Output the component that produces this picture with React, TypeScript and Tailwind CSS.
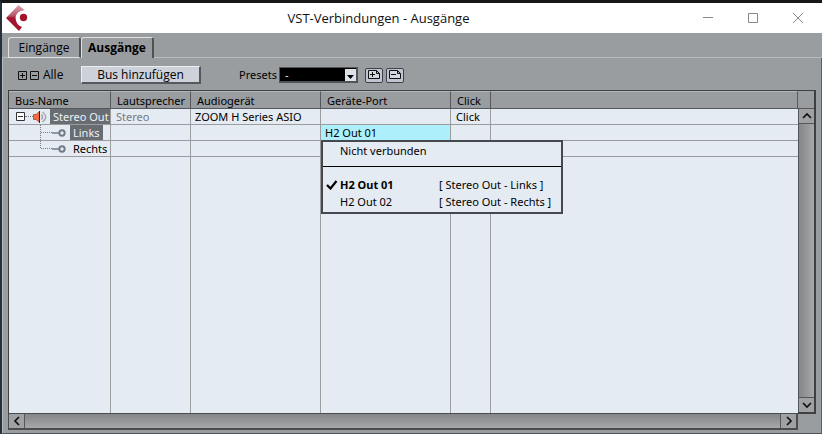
import type { ReactNode } from 'react';

const columns = ['Bus-Name', 'Lautsprecher', 'Audiogerät', 'Geräte-Port', 'Click', ''];

function Logo() {
  return (
    <svg width="23" height="26" viewBox="0 0 23 26" aria-hidden="true">
      <defs>
        <linearGradient id="logo" x1="0" y1="0" x2="0" y2="1">
          <stop offset="0" stopColor="#dba6b2" />
          <stop offset="0.42" stopColor="#b85468" />
          <stop offset="0.5" stopColor="#a3142f" />
          <stop offset="1" stopColor="#a3142f" />
        </linearGradient>
      </defs>
      <path d="M12.5 0 L18.5 5 Q10 6 9.5 13 Q10 20 16 22 L13 26 L0 13 Z" fill="url(#logo)" />
      <circle cx="17.5" cy="12.5" r="3.7" fill="#a3142f" />
    </svg>
  );
}

function Speaker() {
  return (
    <svg width="15" height="14" viewBox="0 0 15 14" aria-hidden="true">
      <path d="M.5 4.5H3L6.5 1.5V12.5L3 9.5H.5Z" fill="#f96a3c" stroke="#8a4030" strokeWidth=".7" />
      <path d="M6.5 1V13" stroke="#222" />
      <path d="M8.5 4.5Q10.5 7 8.5 9.5M9.5 2Q16 7 9.5 12" fill="none" stroke="#a4a8ac" strokeWidth="1.5" />
    </svg>
  );
}

function Branch({ last = false }: { last?: boolean }) {
  return (
    <svg className="ml-[31px] shrink-0" width="28" height="16" viewBox="0 0 28 16" aria-hidden="true">
      <path d={last ? 'M.5 0V8' : 'M.5 0V16'} stroke="#777b80" strokeDasharray="1 1" />
      <path d="M1 7.5H12" stroke="#777b80" strokeDasharray="1 1" />
      <path d="M12 8H20" stroke="#747a82" strokeWidth="1.5" />
      <circle cx="22" cy="8" r="2.7" fill="#e4ebf3" stroke="#747a82" strokeWidth="1.9" />
    </svg>
  );
}

function Arrow({ d, label, className }: { d: string; label: string; className: string }) {
  return (
    <button aria-label={label} className={`flex shrink-0 items-center justify-center border-[#55585b] bg-[#a0a1a3] ${className}`}>
      <svg width="10" height="10" viewBox="0 0 10 10" fill="none" stroke="#111" strokeWidth="1.7">
        <path d={d} />
      </svg>
    </button>
  );
}

function ExpandBox({ label, plus = false }: { label: string; plus?: boolean }) {
  return (
    <button aria-label={label} className="h-[9px] w-[9px]">
      <svg width="9" height="9" viewBox="0 0 9 9" fill="none" stroke="#111">
        <path d={plus ? 'M.5.5H8.5V8.5H.5ZM2 4.5H7M4.5 2V7' : 'M.5.5H8.5V8.5H.5ZM2 4.5H7'} />
      </svg>
    </button>
  );
}

function PresetButton({ label, plus = false }: { label: string; plus?: boolean }) {
  return (
    <button aria-label={label} className="h-[15px] w-[18px] rounded-[2px] border border-[#3d4046] bg-[#bfc5d1]">
      <svg width="16" height="13" viewBox="0 0 16 13" fill="none" stroke="#111">
        <path d="M2.5 1.5H10.5L13.5 4.5V9.5H2.5ZM10.5 1.5V4.5H13.5" fill="#d2d7e0" />
        <path d={plus ? 'M4 5.5H9M6.5 3V8' : 'M4 5.5H9'} />
      </svg>
    </button>
  );
}

function Cell({ children, className = '' }: { children?: ReactNode; className?: string }) {
  return <td className={`h-4 border-r border-b border-[#9b9c9e] p-0 whitespace-nowrap ${className}`}>{children}</td>;
}

function PortMenu() {
  return (
    <div
      role="menu"
      className="absolute top-[15px] left-0 z-10 flex w-[242px] flex-col border-2 border-[#45494e] bg-[#e4ebf3] pb-[2px] text-black"
    >
      <button role="menuitem" className="h-4 pl-[17px] text-left">
        Nicht verbunden
      </button>
      <hr className="mt-[8px] mb-[9px] border-black" />
      <button role="menuitemradio" aria-checked="true" className="flex h-[17px] items-center text-left">
        <svg className="ml-[3px] w-[14px] shrink-0" height="10" viewBox="0 0 14 10" fill="none" stroke="#000" strokeWidth="2.2">
          <path d="M1 5L4.5 8.5L10.5 1" />
        </svg>
        <span className="w-[99px] font-bold">H2 Out 01</span>
        <span>[ Stereo Out - Links ]</span>
      </button>
      <button role="menuitemradio" aria-checked="false" className="flex h-[17px] items-center pl-[17px] text-left">
        <span className="w-[99px]">H2 Out 02</span>
        <span>[ Stereo Out - Rechts ]</span>
      </button>
    </div>
  );
}

function BusTable() {
  return (
    <table className="h-full w-full table-fixed border-separate border-spacing-0 bg-[#e4ebf3] text-[11px] leading-[15px]">
      <colgroup>
        <col className="w-[102px]" />
        <col className="w-[80px]" />
        <col className="w-[130px]" />
        <col className="w-[130px]" />
        <col className="w-[40px]" />
        <col />
      </colgroup>
      <thead>
        <tr>
          {columns.map((name, i) => (
            <th
              key={i}
              className="h-[18px] border-t border-r border-b border-t-[#b5b8ba] border-r-[#55585c] border-b-[#55585c] bg-[#999da0] p-0 pl-[6px] text-left font-normal whitespace-nowrap"
            >
              {name}
            </th>
          ))}
        </tr>
      </thead>
      <tbody>
        <tr>
          <Cell>
            <div className="flex h-[15px] items-center">
              <button aria-label="Stereo Out einklappen" className="ml-[7px] h-[9px] w-[9px] shrink-0">
                <svg width="9" height="9" viewBox="0 0 9 9" fill="#fff" stroke="#333">
                  <path d="M.5.5H8.5V8.5H.5ZM2 4.5H7" />
                </svg>
              </button>
              <span className="w-[8px] shrink-0 border-t border-dotted border-[#777b80]" />
              <Speaker />
              <span className="ml-[2px] h-[15px] grow bg-[#686d74] pl-[3px] text-[#eef1f5]">Stereo Out</span>
            </div>
          </Cell>
          <Cell className="pl-[5px] text-[#777a7e]">Stereo</Cell>
          <Cell className="pl-[4px]">ZOOM H Series ASIO</Cell>
          <Cell />
          <Cell className="pl-[5px]">Click</Cell>
          <Cell className="border-r-0" />
        </tr>
        <tr>
          <Cell>
            <div className="flex h-[15px] items-center">
              <Branch />
              <span className="ml-[2px] h-[15px] bg-[#686d74] px-[3px] text-[#eef1f5]">Links</span>
            </div>
          </Cell>
          <Cell />
          <Cell />
          <Cell className="relative bg-[#aeeffc]">
            <button aria-haspopup="menu" className="block h-[15px] w-full pl-[4px] text-left">
              H2 Out 01
            </button>
            <PortMenu />
          </Cell>
          <Cell />
          <Cell className="border-r-0" />
        </tr>
        <tr>
          <Cell>
            <div className="flex h-[15px] items-center">
              <Branch last />
              <span className="ml-[2px] px-[3px]">Rechts</span>
            </div>
          </Cell>
          <Cell />
          <Cell />
          <Cell />
          <Cell />
          <Cell className="border-r-0" />
        </tr>
        <tr className="h-full">
          {columns.map((_, i) => (
            <td key={i} className="border-r border-[#9b9c9e] p-0 last:border-r-0" />
          ))}
        </tr>
      </tbody>
    </table>
  );
}

export default function App() {
  return (
    <div className="flex h-screen flex-col border-t-3 border-b border-l-2 border-t-[#17181a] border-b-[#505458] border-l-[#25303b] bg-[#999da0] font-['Noto_Sans',sans-serif] text-black">
      <header className="flex h-[30px] shrink-0 items-center bg-white pl-[4px]">
        <Logo />
        <h1 className="grow pl-[43px] text-center font-['Open_Sans',sans-serif] text-[13px] leading-5 text-[#111]">
          VST-Verbindungen - Ausgänge
        </h1>
        <div className="flex text-[#888]">
          <button aria-label="Minimieren" className="flex w-[45px] justify-center">
            <svg width="10" height="10" viewBox="0 0 10 10" stroke="currentColor"><path d="M0 4.5H10" /></svg>
          </button>
          <button aria-label="Maximieren" className="flex w-[45px] justify-center">
            <svg width="10" height="10" viewBox="0 0 10 10" fill="none" stroke="currentColor"><path d="M.5.5H9.5V9.5H.5Z" /></svg>
          </button>
          <button aria-label="Schließen" className="mr-px flex w-[46px] justify-center">
            <svg width="10" height="10" viewBox="0 0 10 10" stroke="currentColor"><path d="M0 0L10 10M10 0L0 10" /></svg>
          </button>
        </div>
      </header>

      <div role="tablist" className="flex h-[25px] shrink-0 items-end font-['Open_Sans',sans-serif] text-xs">
        <div className="h-px w-[6px] bg-[#b9bcbe]" />
        <button role="tab" aria-selected="false" className="h-[21px] w-[73px] rounded-t-[3px] border-t border-r-2 border-b border-l border-t-[#dfe1e3] border-r-[#4e5255] border-b-[#dfe1e3] border-l-[#dfe1e3]">
          Eingänge
        </button>
        <button role="tab" aria-selected="true" className="h-[21px] w-[73px] rounded-t-[3px] border-t border-r-2 border-l border-t-[#dfe1e3] border-r-[#4e5255] border-l-[#dfe1e3] font-bold">
          Ausgänge
        </button>
        <div className="h-px grow bg-[#b9bcbe]" />
      </div>

      <main className="flex min-h-0 grow flex-col border-r border-l border-r-[#5b5f62] border-l-[#b9bcbe] pr-[5px] pb-[3px] pl-[5px]">
        <div className="flex h-[32px] shrink-0 items-center pt-[2px] pl-[10px] font-['Open_Sans',sans-serif] text-xs">
          <ExpandBox label="Alle ausklappen" plus />
          <span className="w-[3px]" />
          <ExpandBox label="Alle einklappen" />
          <span className="w-[39px] pl-[4px]">Alle</span>
          <span className="w-[3px]" />
          <button className="h-[18px] w-[120px] border-t border-r-2 border-b-2 border-l border-t-[#eceef2] border-r-[#55595d] border-b-[#55595d] border-l-[#eceef2] bg-[#cdd1da] leading-[15px]">
            Bus hinzufügen
          </button>
          <label htmlFor="presets" className="ml-[38px] w-[40px] font-['Noto_Sans',sans-serif] text-[11px]">
            Presets
          </label>
          <div className="relative h-[16px] w-[79px]">
            <select id="presets" className="block h-full w-full appearance-none border-t border-r-2 border-b-2 border-l border-[#505458] bg-black pl-[5px] text-[11px] leading-[12px] text-white">
              <option>-</option>
            </select>
            <span className="pointer-events-none absolute top-[2px] right-[2px] flex h-[12px] w-[11px] items-end justify-center bg-[#dfe2e7] pb-[2px]">
              <svg width="7" height="4" viewBox="0 0 7 4"><path d="M0 0H7L3.5 4Z" /></svg>
            </span>
          </div>
          <div className="ml-[7px] flex gap-[3px]">
            <PresetButton label="Preset speichern" plus />
            <PresetButton label="Preset löschen" />
          </div>
        </div>

        <div className="flex min-h-0 grow">
          <div className="flex min-w-0 grow flex-col">
            <div className="min-h-0 grow border-t border-l border-[#3c4043]">
              <BusTable />
            </div>
            <div className="flex h-[17px] shrink-0 border-t border-r-2 border-b-2 border-l border-[#4a4d50]">
              <Arrow label="Nach links" d="M7 1L3 5L7 9" className="w-[16px] border-r" />
              <div className="grow bg-linear-to-b from-[#858688] to-[#a7a8aa]" />
              <Arrow label="Nach rechts" d="M3 1L7 5L3 9" className="w-[16px] border-l" />
            </div>
          </div>
          <div className="mb-[16px] flex w-[18px] shrink-0 flex-col border-t border-r-2 border-b-2 border-[#3c4043]">
            <div className="h-[17px] shrink-0" />
            <Arrow label="Nach oben" d="M1 7L5 3L9 7" className="h-[16px] border-t border-b border-l" />
            <div className="grow border-l border-[#55585b] bg-linear-to-r from-[#858688] to-[#a7a8aa]" />
            <Arrow label="Nach unten" d="M1 3L5 7L9 3" className="h-[15px] border-t border-l" />
          </div>
        </div>
      </main>
    </div>
  );
}
